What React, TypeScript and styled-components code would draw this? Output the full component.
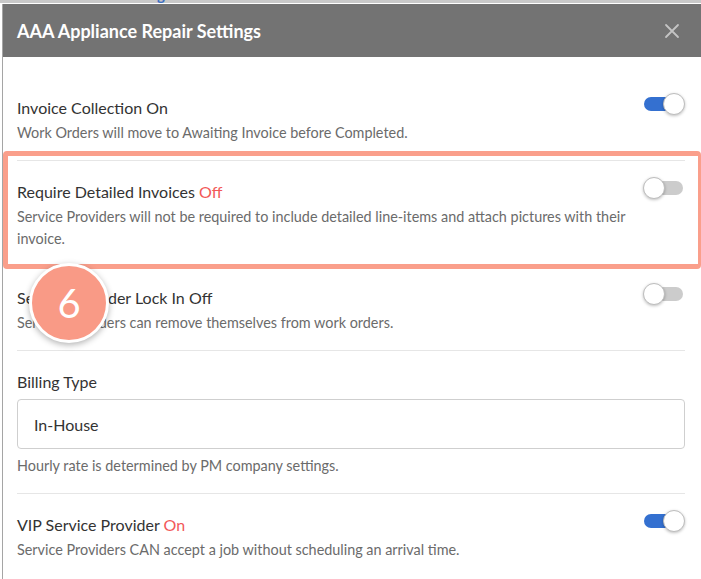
import React from 'react'
import styled, { createGlobalStyle } from 'styled-components'

const GlobalStyle = createGlobalStyle`
  html, body {
    margin: 0;
    padding: 0;
    background: #fff;
    overflow: hidden;
  }
  body {
    font-family: Lato, 'Open Sans', sans-serif;
    -webkit-font-smoothing: antialiased;
  }
`

const Backdrop = styled.div`
  height: 3px;
  background: #c9c9c9;
  overflow: hidden;
  display: flex;
  align-items: flex-end;
  gap: 40px;
  color: #3d6fc2;
  font-size: 15px;
  font-weight: 700;
  line-height: 17px;
  white-space: nowrap;
`

const Modal = styled.div`
  margin: 1px 0 0 2px;
  border-left: 1px solid #a5a5a5;
  background: #fff;
  min-height: 575px;
`

const Header = styled.div`
  height: 53px;
  background: #737373;
  display: flex;
  align-items: center;
  justify-content: space-between;
  padding: 0 20px 0 14px;
`

const Title = styled.h2`
  margin: 0;
  color: #fff;
  font-size: 18px;
  font-weight: 700;
`

const CloseButton = styled.button`
  border: 0;
  background: none;
  padding: 0;
  width: 18px;
  height: 18px;
  display: flex;
  align-items: center;
  justify-content: center;
  cursor: pointer;
`

const Body = styled.div`
  position: relative;
  padding: 20px 16px 0 14px;
`

const Section = styled.div<{ $last?: boolean }>`
  padding: 20px 0 16px;
  border-bottom: ${p => (p.$last ? 'none' : '1px solid #e6e6e6')};
`

const Row = styled.div`
  display: flex;
  align-items: flex-start;
  justify-content: space-between;
`

const Label = styled.div`
  color: #333;
  font-size: 16px;
  line-height: 22px;
`

const State = styled.span`
  color: #f25858;
`

const Desc = styled.div<{ $tight?: boolean }>`
  margin-top: ${p => (p.$tight ? '0' : '3px')};
  color: #6b6b6b;
  font-size: 14.4px;
  line-height: 22px;
  padding-right: 40px;
`

const Field = styled.div`
  margin: 6px 0;
  height: 48px;
  border: 1px solid #cfcfcf;
  border-radius: 4px;
  display: flex;
  align-items: center;
  padding: 0 16px;
  color: #333;
  font-size: 16px;
`

const Track = styled.div<{ $on: boolean }>`
  position: relative;
  flex: none;
  margin-top: -4px;
  width: 42px;
  height: 22px;
  &::before {
    content: '';
    position: absolute;
    left: 1px;
    right: 2px;
    top: 4px;
    height: 14px;
    border-radius: 7px;
    background: ${p => (p.$on ? '#3470d0' : '#cccccc')};
  }
`

const Knob = styled.div<{ $on: boolean }>`
  position: absolute;
  top: 0;
  ${p => (p.$on ? 'right: 0;' : 'left: 0;')}
  width: 20px;
  height: 20px;
  border-radius: 50%;
  background: #fff;
  border: 1px solid #bdbdbd;
  box-shadow: 0 1px 3px rgba(0, 0, 0, 0.25);
`

const Highlight = styled.div`
  position: absolute;
  left: 0;
  right: 0;
  top: 94px;
  height: 108px;
  border: 5px solid #fa9f8b;
  border-right-width: 3px;
  border-radius: 4px;
  pointer-events: none;
`

const StepBadge = styled.div`
  position: absolute;
  left: 26px;
  top: 206px;
  width: 74px;
  height: 74px;
  border-radius: 50%;
  background: #f99a86;
  border: 3px solid #fff;
  box-shadow: 0 2px 6px rgba(0, 0, 0, 0.3);
  display: flex;
  align-items: center;
  justify-content: center;
  color: #fff;
  font-size: 40px;
  font-weight: 400;
`

const Toggle: React.FC<{ on: boolean }> = ({ on }) => (
  <Track $on={on}>
    <Knob $on={on} />
  </Track>
)

type Setting = {
  label: string
  state: string
  desc: string
  on: boolean
  stateColored?: boolean
}

const settings: Setting[] = [
  {
    label: 'Invoice Collection',
    state: 'On',
    desc: 'Work Orders will move to Awaiting Invoice before Completed.',
    on: true,
  },
  {
    label: 'Require Detailed Invoices',
    state: 'Off',
    desc: 'Service Providers will not be required to include detailed line-items and attach pictures with their invoice.',
    on: false,
    stateColored: true,
  },
  {
    label: 'Service Provider Lock In',
    state: 'Off',
    desc: 'Service Providers can remove themselves from work orders.',
    on: false,
  },
]

const SettingRow: React.FC<{ s: Setting; last?: boolean }> = ({ s, last }) => (
  <Section $last={last}>
    <Row>
      <Label>
        {s.label} {s.stateColored ? <State>{s.state}</State> : s.state}
      </Label>
      <Toggle on={s.on} />
    </Row>
    <Desc>{s.desc}</Desc>
  </Section>
)

export default function App() {
  return (
    <>
      <GlobalStyle />
      <Backdrop>
        <span>Service Providers Management</span>
        <span>In Distance</span>
      </Backdrop>
      <Modal>
        <Header>
          <Title>AAA Appliance Repair Settings</Title>
          <CloseButton aria-label="Close">
            <svg width="16" height="16" viewBox="0 0 16 16">
              <path d="M2 2 L14 14 M14 2 L2 14" stroke="#c4c4c4" strokeWidth="1.8" strokeLinecap="round" />
            </svg>
          </CloseButton>
        </Header>
        <Body>
          {settings.map(s => (
            <SettingRow key={s.label} s={s} />
          ))}
          <Section>
            <Label>Billing Type</Label>
            <Field>In-House</Field>
            <Desc $tight>Hourly rate is determined by PM company settings.</Desc>
          </Section>
          <SettingRow
            last
            s={{
              label: 'VIP Service Provider',
              state: 'On',
              desc: 'Service Providers CAN accept a job without scheduling an arrival time.',
              on: true,
              stateColored: true,
            }}
          />
          <Highlight />
          <StepBadge>6</StepBadge>
        </Body>
      </Modal>
    </>
  )
}
